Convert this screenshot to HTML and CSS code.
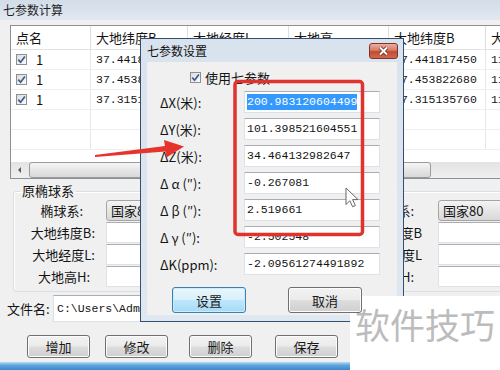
FILE: index.html
```html
<!DOCTYPE html>
<html lang="zh-CN">
<head>
  <meta charset="UTF-8" />
  <meta name="viewport" content="width=device-width, initial-scale=1.0"/>
  <title>七参数计算</title>
  <link rel="stylesheet" href="styles.css">
</head>
<body>
  <div class="window">
    <div class="titlebar">七参数计算</div>

    <div class="grid">
      <div class="grid-row grid-head">
        <div class="cell c1">点名</div>
        <div class="cell c2">大地纬度B</div>
        <div class="cell c3">大地经度L</div>
        <div class="cell c4">大地高</div>
        <div class="cell c5">大地纬度B</div>
        <div class="cell c6">大地经度L</div>
      </div>
      <div class="grid-row">
        <div class="cell c1"><span class="chk"><svg width="9" height="9" viewBox="0 0 9 9"><path d="M1.3 4.6 L3.6 7.2 L7.9 1.4" /></svg></span>1</div>
        <div class="cell c2 num">37.441817450</div>
        <div class="cell c3 num">117.25631840</div>
        <div class="cell c4 num">52.3600</div>
        <div class="cell c5 num">37.441817450</div>
        <div class="cell c6 num">117.2563</div>
      </div>
      <div class="grid-row">
        <div class="cell c1"><span class="chk"><svg width="9" height="9" viewBox="0 0 9 9"><path d="M1.3 4.6 L3.6 7.2 L7.9 1.4" /></svg></span>1</div>
        <div class="cell c2 num">37.453822680</div>
        <div class="cell c3 num">117.31245570</div>
        <div class="cell c4 num">48.1200</div>
        <div class="cell c5 num">37.453822680</div>
        <div class="cell c6 num">117.3124</div>
      </div>
      <div class="grid-row">
        <div class="cell c1"><span class="chk"><svg width="9" height="9" viewBox="0 0 9 9"><path d="M1.3 4.6 L3.6 7.2 L7.9 1.4" /></svg></span>1</div>
        <div class="cell c2 num">37.315135760</div>
        <div class="cell c3 num">117.19873420</div>
        <div class="cell c4 num">50.7700</div>
        <div class="cell c5 num">37.315135760</div>
        <div class="cell c6 num">117.1987</div>
      </div>
      <div class="grid-row">
        <div class="cell c1"></div><div class="cell c2"></div><div class="cell c3"></div>
        <div class="cell c4"></div><div class="cell c5"></div><div class="cell c6"></div>
      </div>
      <div class="grid-row">
        <div class="cell c1"></div><div class="cell c2"></div><div class="cell c3"></div>
        <div class="cell c4"></div><div class="cell c5"></div><div class="cell c6"></div>
      </div>
      <div class="grid-gap"></div>
      <div class="hscroll">
        <span class="sb-btn"></span>
        <span class="sb-thumb"></span>
      </div>
    </div>

    <div class="groups">
      <fieldset class="group group-src">
        <legend>原椭球系</legend>
        <div class="field"><span class="field-label pad-12">椭球系:</span><span class="combo">国家80</span></div>
        <div class="field"><span class="field-label">大地纬度B:</span><span class="edit"></span></div>
        <div class="field"><span class="field-label">大地经度L:</span><span class="edit"></span></div>
        <div class="field"><span class="field-label pad-5">大地高H:</span><span class="edit"></span></div>
      </fieldset>
      <fieldset class="group group-dst">
        <legend>目标椭球系</legend>
        <div class="field"><span class="field-label pad-8">目标椭球系:</span><span class="combo">国家80</span></div>
        <div class="field"><span class="field-label">大地纬度B</span><span class="edit"></span></div>
        <div class="field"><span class="field-label">大地经度L</span><span class="edit"></span></div>
        <div class="field"><span class="field-label pad-8">大地高H:</span><span class="edit"></span></div>
      </fieldset>
    </div>

    <div class="file-row">
      <span class="file-label">文件名:</span>
      <span class="edit file num">C:\Users\Administrator\Desktop\qcs.txt</span>
    </div>

    <div class="actions">
      <button class="btn">增加</button>
      <button class="btn">修改</button>
      <button class="btn">删除</button>
      <button class="btn">保存</button>
    </div>

    <div class="taskbar"></div>
  </div>

  <!-- 七参数设置 对话框 -->
  <div class="dialog">
    <div class="dlg-title">
      <span>七参数设置</span>
      <span class="dlg-close"><svg width="13" height="10" viewBox="0 0 13 10"><path class="x-shadow" d="M3 1.5 L10 8.5 M10 1.5 L3 8.5" /><path class="x-mark" d="M3 1.5 L10 8.5 M10 1.5 L3 8.5" /></svg></span>
    </div>
    <div class="dlg-body">
      <div class="use-row">
        <span class="chk"><svg width="9" height="9" viewBox="0 0 9 9"><path d="M1.3 4.6 L3.6 7.2 L7.9 1.4" /></svg></span>
        <span>使用七参数</span>
      </div>
      <div class="param-list">
        <div class="param"><span class="param-label">ΔX(米):</span><span class="edit param-edit num"><span class="sel">200.983120604499</span></span></div>
        <div class="param"><span class="param-label">ΔY(米):</span><span class="edit param-edit num">101.398521604551</span></div>
        <div class="param"><span class="param-label">ΔZ(米):</span><span class="edit param-edit num">34.464132982647</span></div>
        <div class="param"><span class="param-label">Δ α (″):</span><span class="edit param-edit num">-0.267081</span></div>
        <div class="param"><span class="param-label">Δ β (″):</span><span class="edit param-edit num">2.519661</span></div>
        <div class="param"><span class="param-label">Δ γ (″):</span><span class="edit param-edit num">-2.502548</span></div>
        <div class="param"><span class="param-label">ΔK(ppm):</span><span class="edit param-edit num">-2.09561274491892</span></div>
      </div>
      <div class="dlg-actions">
        <button class="btn dlg-btn default">设置</button>
        <button class="btn dlg-btn cancel">取消</button>
      </div>
    </div>
  </div>

  <!-- 标注：红框、箭头、鼠标 -->
  <svg class="marks" width="500" height="370" viewBox="0 0 500 370">
    <rect x="235" y="81.5" width="127.5" height="153" rx="3" fill="none" stroke="#e0332d" stroke-width="3.5" />
    <polygon points="95,155 165,146 164,140 184,146.5 166.5,157.5 165.5,151.5 95,157" fill="#e5342c" />
    <path d="M346 188 L346 204.5 L349.8 200.7 L352.6 206.7 L355.4 205.6 L352.6 199.6 L358 199.6 Z" fill="#fff" stroke="#666" stroke-width="1" stroke-linejoin="round" />
  </svg>

  <div class="watermark">软件技巧</div>
</body>
</html>
```

FILE: styles.css
```css
body {
  margin: 0;
  width: 500px;
  height: 370px;
  overflow: hidden;
  position: relative;
  background: #f0f0f0;
  font-family: "Noto Sans CJK SC", sans-serif;
  font-size: 13px;
  color: #141414;
}
.num {
  font-family: "Liberation Mono", monospace;
  font-size: 11.5px;
}
.window {
  height: 370px;
  display: flex;
  flex-direction: column;
}
.titlebar {
  height: 20px;
  line-height: 20px;
  padding-left: 3px;
  font-size: 12px;
  background: linear-gradient(#d2dde9, #e1e8f0);
  color: #1e1e1e;
}

/* 表格 */
.grid {
  flex: none;
  margin: 5px 0 0 10px;
  width: 520px;
  border: 1px solid #8c9096;
  background: #fff;
}
.grid-row {
  display: flex;
  height: 20px;
  box-sizing: border-box;
  border-bottom: 1px solid #efefef;
}
.grid-head {
  height: 24px;
  border-bottom: 1px solid #e3e3e3;
}
.cell {
  flex: none;
  box-sizing: border-box;
  border-right: 1px solid #e6e6e6;
  padding-left: 5px;
  line-height: 19px;
  white-space: nowrap;
  overflow: hidden;
  display: flex;
  align-items: center;
}
.grid-head .cell {
  line-height: 23px;
  border-right-color: #dedede;
}
.c1 { width: 80px; }
.c2 { width: 97px; }
.c3 { width: 101px; }
.c4 { width: 100px; }
.c5 { width: 97px; }
.c6 { width: 100px; }
.grid-gap {
  height: 12px;
}
.hscroll {
  height: 16px;
  display: flex;
  align-items: center;
  background: linear-gradient(#e3e3e3, #efefef);
}
.sb-btn {
  flex: none;
  width: 17px;
  height: 16px;
  display: flex;
  align-items: center;
  justify-content: center;
}
.sb-btn::before {
  content: "";
  border-top: 3px solid transparent;
  border-bottom: 3px solid transparent;
  border-right: 3px solid #5a5a5a;
}
.sb-thumb {
  flex: none;
  margin-left: 1px;
  width: 400px;
  height: 14px;
  border: 1px solid #9b9b9b;
  border-radius: 3px;
  background: linear-gradient(#f5f5f5, #e6e6e6 50%, #d9d9d9);
}

/* 复选框 */
.chk {
  flex: none;
  width: 11px;
  height: 11px;
  box-sizing: border-box;
  border: 1px solid #8f8f8f;
  background: linear-gradient(135deg, #dcdcdc, #fbfbfb);
  display: inline-flex;
  align-items: center;
  justify-content: center;
  margin-right: 9px;
}
.chk path {
  fill: none;
  stroke: #3b5b94;
  stroke-width: 1.7;
}

/* 分组 */
.groups {
  display: flex;
  margin-top: 5px;
}
.group {
  flex: none;
  margin: 0;
  padding: 1px 0 4px;
  border: 1px solid #d5dfe5;
  border-radius: 3px;
  min-width: 0;
  box-shadow: inset 1px 1px 0 #fff;
  box-sizing: border-box;
}
.group legend {
  padding: 0 2px;
  margin-left: 6px;
  line-height: 14px;
}
.group-src {
  margin-left: 13px;
  width: 277px;
}
.group-dst {
  margin-left: 6px;
  width: 300px;
}
.field {
  display: flex;
  align-items: center;
  height: 22px;
}
.field-label {
  box-sizing: border-box;
  text-align: right;
  flex: none;
}
.group-src .field-label {
  width: 81px;
}
.group-dst .field-label {
  width: 125px;
}
.pad-12 { padding-right: 12px; }
.pad-8 { padding-right: 8px; }
.pad-5 { padding-right: 5px; }
.combo {
  flex: none;
  margin-left: 11px;
  width: 170px;
  height: 21px;
  box-sizing: border-box;
  border: 1px solid #a5a5a5;
  border-radius: 3px;
  background: linear-gradient(#f4f4f4, #e6e6e6 50%, #d8d8d8);
  padding-left: 4px;
  line-height: 19px;
}
.edit {
  display: block;
  box-sizing: border-box;
  background: #fff;
  border: 1px solid #dde2e8;
  border-top-color: #abadb3;
  white-space: nowrap;
  overflow: hidden;
}
.field .edit {
  flex: none;
  margin-left: 11px;
  width: 170px;
  height: 21px;
}
.group-dst .combo,
.group-dst .field .edit {
  margin-left: 16px;
}

/* 文件名 */
.file-row {
  display: flex;
  align-items: center;
  margin-top: 3px;
  height: 27px;
}
.file-label {
  flex: none;
  width: 53px;
  box-sizing: border-box;
  padding-left: 7px;
}
.file {
  flex: none;
  width: 300px;
  height: 27px;
  line-height: 25px;
  padding-left: 3px;
}

/* 按钮 */
.actions {
  display: flex;
  margin-top: 13px;
}
.btn {
  flex: none;
  width: 63px;
  height: 23px;
  padding: 0;
  font-family: "Noto Sans CJK SC", sans-serif;
  font-size: 13px;
  color: #1a1a1a;
  border: 1px solid #707070;
  border-radius: 3px;
  background: linear-gradient(#f2f2f2, #ebebeb 48%, #dddddd 52%, #cfcfcf);
  box-shadow: inset 0 0 0 1px #fcfcfc;
}
.actions .btn:nth-child(1) { margin-left: 27px; }
.actions .btn:nth-child(2) { margin-left: 15px; }
.actions .btn:nth-child(3) { margin-left: 21px; }
.actions .btn:nth-child(4) { margin-left: 23px; }
.taskbar {
  margin-top: 4px;
  height: 8px;
  background: linear-gradient(#b5dcf2, #5fa6dc 40%, #3b86cc);
}

/* 对话框 */
.dialog {
  position: absolute;
  left: 140px;
  top: 38px;
  width: 264px;
  height: 284px;
  box-sizing: border-box;
  border: 1px solid #35506f;
  background: linear-gradient(#d9e3ee, #dfe7f0);
  padding: 0 6px 6px;
}
.dlg-title {
  height: 23px;
  display: flex;
  align-items: center;
  justify-content: space-between;
  font-size: 12px;
  color: #111;
  margin: 0 -1px 0 0;
}
.dlg-close {
  width: 29px;
  height: 16px;
  box-sizing: border-box;
  border: 1px solid #7e3528;
  border-radius: 3px;
  background: linear-gradient(#eab0a3, #d87a64 45%, #c6482f 55%, #d06a4f);
  display: flex;
  align-items: center;
  justify-content: center;
}
.x-shadow {
  stroke: #6a2a1f;
  stroke-width: 3.6;
  fill: none;
}
.x-mark {
  stroke: #fff;
  stroke-width: 2;
  fill: none;
}
.dlg-body {
  height: 253px;
  background: #f0f0f0;
  padding-top: 8px;
  box-sizing: border-box;
}
.use-row {
  display: flex;
  align-items: center;
  height: 14px;
  padding-left: 43px;
}
.use-row .chk {
  margin-right: 4px;
}
.param-list {
  margin-top: 7px;
  display: flex;
  flex-direction: column;
  gap: 5px;
}
.param {
  display: flex;
  align-items: center;
  height: 22px;
  padding-left: 13px;
}
.param-label {
  width: 84px;
  flex: none;
}
.param-edit {
  flex: none;
  width: 136px;
  height: 22px;
  line-height: 20px;
  padding-left: 2px;
}
.sel {
  background: #3399ff;
  color: #fff;
  display: inline-block;
  line-height: 16px;
}
.dlg-actions {
  display: flex;
  margin-top: 12px;
  padding-left: 25px;
  gap: 42px;
}
.dlg-btn {
  width: 74px;
  height: 26px;
}
.dlg-btn.default {
  border-color: #3c7fb1;
  background: linear-gradient(#eaf6fd, #d9f0fc 48%, #bee6fd 52%, #a7d9f5);
  box-shadow: inset 0 0 0 1px #c9eefb;
}
.cancel {
  position: relative;
  z-index: 3;
}

/* 标注 */
.marks {
  position: absolute;
  left: 0;
  top: 0;
  z-index: 4;
}
.watermark {
  position: absolute;
  left: 350px;
  top: 296px;
  width: 150px;
  height: 74px;
  box-sizing: border-box;
  padding-left: 5px;
  background: #fff;
  z-index: 2;
  font-size: 35px;
  line-height: 56px;
  color: #bcbcbc;
  white-space: nowrap;
}
```
